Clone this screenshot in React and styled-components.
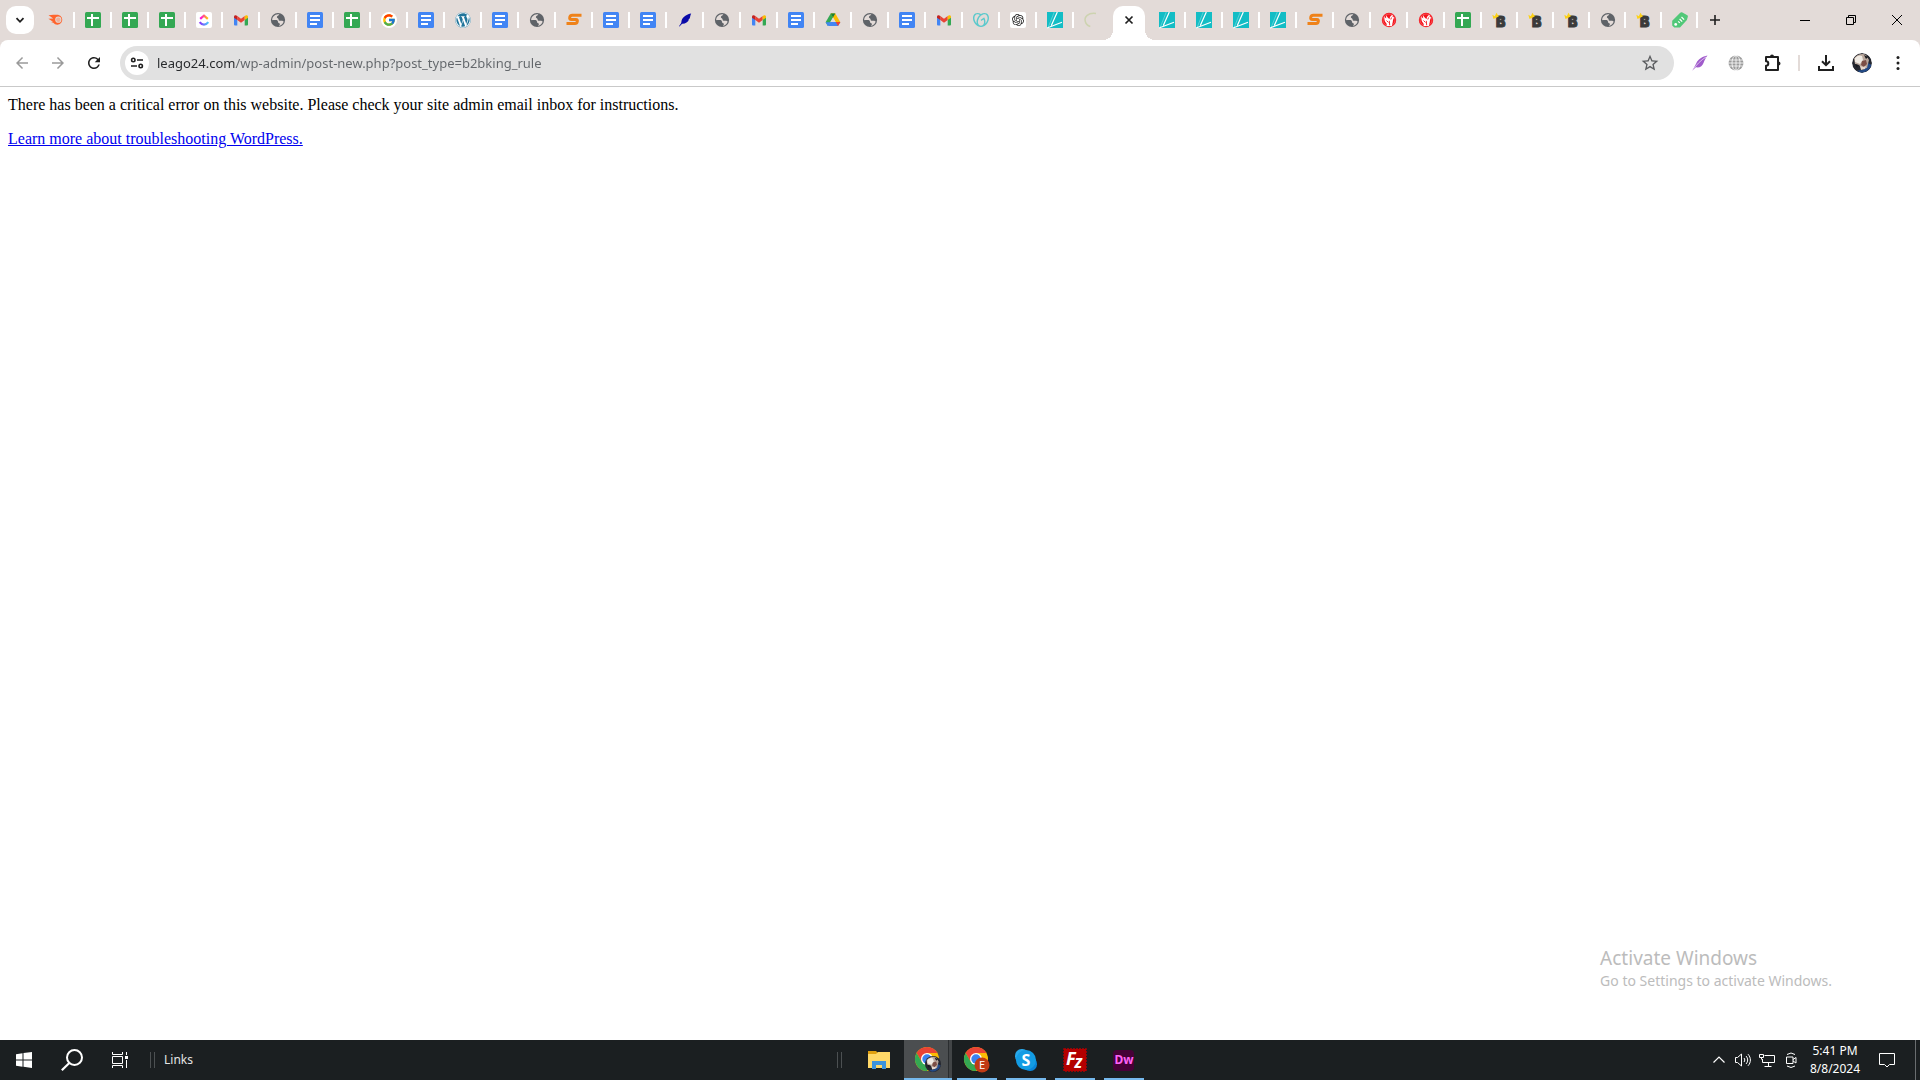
import React from "react";
import styled, { createGlobalStyle, css } from "styled-components";
import { FcGoogle } from "react-icons/fc";
import { FaWordpress } from "react-icons/fa";
import { MdRefresh, MdStarBorder, MdArrowBack, MdArrowForward } from "react-icons/md";
import { SiOpenai, SiGodaddy } from "react-icons/si";

const UI_FONT = '"Segoe UI", "Noto Sans", "Open Sans", sans-serif';

const GlobalStyle = createGlobalStyle`
  *, *::before, *::after { box-sizing: border-box; }
  body { margin: 0; background: #fff; }
  button { border: 0; padding: 0; margin: 0; background: transparent; color: inherit; font: inherit; }
  svg { display: block; flex: none; overflow: visible; }
`;

/* ---------- layout ---------- */

const Desktop = styled.div`
  display: flex;
  flex-direction: column;
  min-height: 100vh;
  font-family: ${UI_FONT};
`;

const Browser = styled.div`
  flex: 1;
  display: flex;
  flex-direction: column;
  background: #e3dbd8;
  min-width: 0;
`;

const TabStrip = styled.header`
  display: flex;
  height: 40px;
  padding-left: 6px;
`;

const TabSearch = styled.button`
  display: grid;
  place-items: center;
  width: 28px;
  height: 28px;
  margin: 6px 4px 0 0;
  border-radius: 10px;
  background: #fff;
  color: #1f1f1f;
`;

const TabList = styled.div`
  display: flex;
`;

const Tab = styled.button`
  display: flex;
  align-items: center;
  justify-content: space-between;
  width: ${(p) => (p.$narrow ? 36 : 37)}px;
  padding-left: 10px;
  &::after {
    content: "";
    width: 2px;
    height: 16px;
    background: ${(p) => (p.$last ? "transparent" : "#fff")};
  }
`;

const ActiveTab = styled.button`
  position: relative;
  display: grid;
  place-items: center;
  width: 32px;
  height: 34px;
  margin: 6px 4px 0 2px;
  border-radius: 10px 10px 0 0;
  background: #fff;
  color: #1f1f1f;
  &::before,
  &::after {
    content: "";
    position: absolute;
    bottom: 0;
    width: 10px;
    height: 10px;
  }
  &::before {
    right: 100%;
    background: radial-gradient(circle at 0 0, transparent 10px, #fff 10px);
  }
  &::after {
    left: 100%;
    background: radial-gradient(circle at 100% 0, transparent 10px, #fff 10px);
  }
  svg { margin-bottom: 6px; }
`;

const NewTab = styled.button`
  display: grid;
  place-items: center;
  width: 34px;
  color: #1f1f1f;
`;

const WindowControls = styled.div`
  display: flex;
  margin-left: auto;
`;

const WindowButton = styled.button`
  display: grid;
  place-items: center;
  width: 46px;
`;

const Toolbar = styled.nav`
  display: flex;
  align-items: center;
  height: 46px;
  padding: 0 4px;
  border-radius: 8px 8px 0 0;
  background: #fff;
`;

const ToolButton = styled.button`
  display: grid;
  place-items: center;
  width: 36px;
  height: 34px;
  color: ${(p) => (p.disabled ? "#9a9a9a" : "#1f1f1f")};
`;

const AddressBar = styled.form`
  flex: 1;
  display: flex;
  align-items: center;
  height: 34px;
  margin: 0 8px;
  padding: 0 6px 0 5px;
  border-radius: 17px;
  background: #e1e1e1;
`;

const SiteInfo = styled.button`
  display: grid;
  place-items: center;
  width: 24px;
  height: 24px;
  border-radius: 50%;
  background: #fff;
  color: #1f1f1f;
`;

const AddressInput = styled.input`
  flex: 1;
  min-width: 0;
  height: 24px;
  margin-left: 8px;
  padding: 0;
  border: 0;
  outline: 0;
  font: 13px/24px ${UI_FONT};
  color: transparent;
  caret-color: #1f1f1f;
  background: linear-gradient(to right, #26282b 79px, #62666a 79px);
  background-clip: text;
  -webkit-background-clip: text;
`;

const StarButton = styled.button`
  display: grid;
  place-items: center;
  width: 36px;
  height: 34px;
  color: #5a5c5f;
`;

const ToolDivider = styled.span`
  width: 2px;
  height: 16px;
  margin: 0 8px;
  background: #e3dbd8;
`;

const Avatar = styled.span`
  width: 20px;
  height: 20px;
  border-radius: 50%;
  overflow: hidden;
`;

/* ---------- page ---------- */

const Page = styled.main`
  position: relative;
  flex: 1;
  padding: 8px;
  border-top: 1px solid #c9c9c9;
  background: #fff;
  color: #000;
  font: 16px/20px "Times New Roman", "Liberation Serif", serif;
`;

const Message = styled.p`
  margin: 0 0 14px;
`;

const HelpLink = styled.a`
  color: #0000ee;
`;

const Watermark = styled.aside`
  position: absolute;
  right: 88px;
  bottom: 49px;
  color: #bcbcbc;
  font: 14px/20px ${UI_FONT};
`;

const WatermarkTitle = styled.div`
  font-size: 19px;
  line-height: 26px;
`;

/* ---------- taskbar ---------- */

const Taskbar = styled.footer`
  display: flex;
  justify-content: space-between;
  height: 40px;
  background: #1b1f21;
  color: #fff;
  font: 12px/18px ${UI_FONT};
`;

const TaskGroup = styled.div`
  display: flex;
  align-items: center;
`;

const TaskButton = styled.button`
  display: grid;
  place-items: center;
  width: 48px;
  height: 40px;
`;

const Grip = styled.span`
  width: 5px;
  height: 16px;
  margin-left: 6px;
  border: solid #4c5052;
  border-width: 0 1px;
`;

const LinksLabel = styled.span`
  margin-left: 9px;
  color: #e4e4e4;
`;

const Apps = styled(TaskGroup)`
  flex: 1;
  margin-left: 638px;
  min-width: 0;
`;

const AppButton = styled.button`
  display: grid;
  place-items: center;
  width: 40px;
  height: 40px;
  padding-top: 2px;
  margin-right: 9px;
  border-bottom: 2px solid ${(p) => (p.$idle ? "transparent" : "#76b9ed")};
  ${(p) =>
    p.$active &&
    css`
      width: 48px;
      margin-right: 5px;
      background: linear-gradient(to right, #4b4e50 44px, #2a2d2f 44px, #2a2d2f 45px, #424547 45px);
    `}
`;

const Explorer = styled(AppButton)`
  margin: 0 5px 0 17px;
`;

const DwTile = styled.span`
  display: grid;
  place-items: center;
  width: 21px;
  height: 21px;
  border-radius: 4px;
  background: #470137;
  color: #ff61f6;
  font: 700 12px/20px ${UI_FONT};
`;

const TrayButton = styled.button`
  display: grid;
  place-items: center;
  width: 24px;
  height: 40px;
`;

const Clock = styled.time`
  width: 64px;
  margin-right: 6px;
  text-align: center;
  line-height: 18px;
  white-space: pre-line;
`;

const ActionCenter = styled(TaskButton)`
  width: 28px;
  margin-right: 14px;
`;

const ShowDesktop = styled.button`
  width: 5px;
  height: 40px;
  border-left: 1px solid #6a6d6f;
`;

/* ---------- favicons ---------- */

const Svg = ({ size = 16, box = 16, children, ...rest }) => (
  <svg width={size} height={size} viewBox={`0 0 ${box} ${box}`} fill="none" aria-hidden="true" {...rest}>
    {children}
  </svg>
);

const Semrush = () => (
  <Svg>
    <path d="M.5 3.200c3.500-.4 6.500-.5 9.500-.5a5 5 0 1 1-4.700 8l-2.300-.6 2-.4L.4 6.800l4.800-.4C3.600 5 2 4.200.5 3.200z" fill="#ff642d" />
    <circle cx="10.300" cy="7.700" r="3.100" fill="#e3dbd8" />
    <circle cx="10.300" cy="7.700" r="2.200" fill="#ff642d" opacity=".35" />
  </Svg>
);
const Sheets = () => (
  <Svg>
    <rect width="16" height="16" rx="1.5" fill="#34a853" />
    <path d="M2 6h12M7 2v12" stroke="#fff" strokeWidth="2" />
  </Svg>
);
const Docs = () => (
  <Svg>
    <rect width="16" height="16" rx="1.5" fill="#4285f4" />
    <path d="M3 4h10M3 8h10M3 12h7" stroke="#fff" strokeWidth="2" />
  </Svg>
);
const ClickUp = () => (
  <Svg>
    <defs>
      <linearGradient id="cuTop"><stop stopColor="#ff02f0" /><stop offset="1" stopColor="#ffc800" /></linearGradient>
      <linearGradient id="cuBottom"><stop stopColor="#8930fd" /><stop offset="1" stopColor="#49ccf9" /></linearGradient>
    </defs>
    <rect width="16" height="16" rx="2" fill="#fff" />
    <path d="M4.200 6.900 8 3.600l3.800 3.300" stroke="url(#cuTop)" strokeWidth="2.200" />
    <path d="M3.700 10.200c2.300 3.200 6.300 3.200 8.600 0" stroke="url(#cuBottom)" strokeWidth="2.200" />
  </Svg>
);
const Gmail = () => (
  <Svg>
    <path d="M1 4.500 4.300 7v6.500H2a1 1 0 0 1-1-1z" fill="#4285f4" />
    <path d="M15 4.500 11.700 7v6.500H14a1 1 0 0 0 1-1z" fill="#34a853" />
    <path d="m4.300 4 3.700 2.800L11.700 4v4L8 10.800 4.300 8z" fill="#ea4335" />
    <path d="M11.700 4c1.500-1.400 3.300-1 3.300.8v.9L11.700 8z" fill="#fbbc04" />
    <path d="M4.300 4C2.800 2.600 1 3 1 4.800v.9L4.300 8z" fill="#c5221f" />
  </Svg>
);
const DefaultGlobe = () => (
  <Svg>
    <circle cx="8" cy="8" r="7.100" fill="#5f6368" />
    <path d="M9.300 2.300C8.600 3.800 7 3.900 6.900 5c-.1 1 .9 1 1.400 1.700.5.800.2 1.700 1.200 2 1.100.3 2.500-.3 3.300.3.600.5.800.500 1 .1-.4 2.400-2.400 4.400-4.700 4.800.1-.9.9-1 .8-2-.1-.9-1.200-.8-1.700-1.500-.5-.8.100-1.500-.8-2-1.300-.7-3.400 0-5.200-.1C2 5.100 4.500 2.300 8 2.200z" fill="#e3dbd8" />
    <path d="M2.200 8.300C4 8 6 8.600 6.500 9.400c.3.600-.7 1-.4 1.900.3.700 1 1 1 2.300C4.500 13.300 2.400 11 2.200 8.300z" fill="#5f6368" />
  </Svg>
);
const Google = () => (
  <Svg>
    <circle cx="8" cy="8" r="8" fill="#fff" />
    <FcGoogle x="1" y="1" size={14} />
  </Svg>
);
const WordPress = () => (
  <Svg>
    <circle cx="8" cy="8" r="7.800" fill="#fff" />
    <FaWordpress size={16} color="#21759b" />
  </Svg>
);
const OrangeS = () => (
  <Svg>
    <path d="M15.500 3.200H6.300c-1.500 0-2.200.5-2.500 1.800-.4 1.900 0 2.600 1.800 2.600h4.300c1.400 0 1.700.5 1.400 1.900-.3 1.500-.9 2-2.300 2H.5" stroke="#ef8219" strokeWidth="3" />
  </Svg>
);
const Quill = () => (
  <Svg>
    <path d="M14.200 1.500c-4 .8-8.200 3-9.600 7l-.4 2.600L2 14.300l.5.300 2.600-2.800c3 .2 6-1.400 6.900-4.200l-.8-.2 1.500-.9c.5-1.700.6-3.300 1.500-5z" fill="#0a0aa8" />
  </Svg>
);
const Drive = () => (
  <Svg>
    <path d="M5.700 1.500h4.600L5.300 10.200 2.900 14 .6 10.300z" fill="#34a853" />
    <path d="M5.700 1.500h4.600l5.100 8.700h-4.700z" fill="#fbbc04" />
    <path d="M2.900 14 5.400 10h10L13 14z" fill="#4285f4" />
    <path d="m10.700 10 2.300 4 2.400-4z" fill="#ea4335" />
    <path d="M.6 10.300h4.800L2.900 14z" fill="#4285f4" />
    <path d="M5.700 1.500h4.600L8 5.600z" fill="#188038" />
    <path d="M8 5.600 5.400 10h5.300z" fill="#e3dbd8" />
  </Svg>
);
const GoDaddy = () => <SiGodaddy size={16} color="#5bc9cc" aria-hidden="true" />;
const OpenAI = () => (
  <Svg>
    <rect width="16" height="16" rx="2" fill="#fff" />
    <SiOpenai x="2" y="2" size={12} color="#222" />
  </Svg>
);
const Leago = () => (
  <Svg>
    <rect width="16" height="16" fill="#13bdc5" />
    <path d="M10.300 0 4.300 13.500M0 16 15 10.300" stroke="#fff" strokeWidth="1.200" />
    <path d="M7.300 0 1.300 15" stroke="#fff" strokeWidth=".5" opacity=".6" />
  </Svg>
);
const Spinner = () => (
  <Svg>
    <path d="M8 1.200a7 7 0 1 0-1 13.500" stroke="#e3dbd8" strokeWidth="1" />
    <path d="M12 1.500C4 .5 0 5 1.300 9.500c.6 2.300 2.400 4.200 5 5" stroke="#cdd3b0" strokeWidth="1.500" />
  </Svg>
);
const RedBird = () => (
  <Svg>
    <circle cx="8" cy="8" r="7.200" fill="#f4141c" />
    <circle cx="8" cy="8" r="6" stroke="#fff" strokeWidth=".4" opacity=".6" />
    <path d="M3.300 4c.5 1.200 1 2 2 2.500C4.900 5.200 5 4 5.600 3.300c.2 1.300.8 2.200 1.800 2.900L8.600 7C8.700 5 9.800 3.300 12 2.800c-.5 1-.6 1.700-.1 2.400l1.200-.2c-.2 1.400-1.100 2.400-1.200 3.700-.1 1.800-.6 3.100-1.100 5.300H5.700c.2-1.600-.1-2.400-.6-3.100C3.600 9.800 3.200 7 3.300 4z" fill="#fff" />
    <path d="m8.300 8.800.4 4.500M5.500 8.500l2 2M10.500 5.500l-.7 2" stroke="#f4141c" strokeWidth=".9" />
  </Svg>
);
const KingB = () => (
  <Svg>
    <text x="4" y="15" fill="#3a3a3a" stroke="#3a3a3a" strokeWidth="1" fontFamily="Inter, sans-serif" fontWeight="900" fontSize="14">B</text>
    <path d="M1.500 7 .3 2.800l2.500 1.400L4.500.7l1.600 2.700L7.500 3 6.300 4.800z" fill="#fcd116" />
  </Svg>
);
const Tag = () => (
  <Svg>
    <path d="M10.400.4 15.300 3.200c.5.300.7.800.6 1.300l-1 3.500L8 15.600H2.200L.2 13.400V8.800L8.200.7c.6-.6 1.500-.7 2.200-.3z" fill="#51c878" />
    <circle cx="3.700" cy="12.400" r="1.400" fill="#fff" />
    <path d="m6.200 9.300 1.600 1.600M7.600 7l2.600 2.600M9.500 5l2.600 2.600" stroke="#fff" strokeWidth="1.200" />
  </Svg>
);

const FAVICONS = {
  semrush: Semrush, sheets: Sheets, docs: Docs, clickup: ClickUp, gmail: Gmail, globe: DefaultGlobe,
  google: Google, wordpress: WordPress, orange: OrangeS, quill: Quill, drive: Drive, godaddy: GoDaddy,
  openai: OpenAI, leago: Leago, loading: Spinner, bird: RedBird, b2bking: KingB, tag: Tag,
};

const TABS_BEFORE = [
  "semrush", "sheets", "sheets", "sheets", "clickup", "gmail", "globe", "docs", "sheets", "google",
  "docs", "wordpress", "docs", "globe", "orange", "docs", "docs", "quill", "globe", "gmail", "docs",
  "drive", "globe", "docs", "gmail", "godaddy", "openai", "leago", "loading",
];
const TABS_AFTER = ["leago", "leago", "leago", "leago", "orange", "globe", "bird", "bird", "sheets"];
const TABS_NARROW = ["b2bking", "b2bking", "b2bking", "globe", "b2bking", "tag"];

const renderTabs = (names, extra = {}) =>
  names.map((name, i) => {
    const Icon = FAVICONS[name];
    return (
      <Tab key={`${name}-${i}`} role="tab" aria-selected="false" aria-label={name} $last={name === "loading"} {...extra}>
        <Icon />
      </Tab>
    );
  });

/* ---------- drawings ---------- */

const Photo = ({ size = 20, ...rest }) => (
  <Svg size={size} box={20} {...rest}>
    <circle cx="10" cy="10" r="10" fill="#25272f" />
    <path d="M8 19.500c5 .5 9.500-2 11.500-7.500l-3.500-2-5 7-6 .5z" fill="#234a86" />
    <path d="M2 5.500c3-4.500 9-5.500 12-3.500l3 5-2 8-5 1-3-4-4-1z" fill="#b9a79c" />
    <path d="M3 5c3-3 5-3 7-2l1 4-3 4-5-2z" fill="#f0ebe4" />
    <path d="m10 8 4-1 1 4-3 3-3-2z" fill="#7b4e45" />
    <path d="m8 13 3 1 3-1-1 3-4 1z" fill="#e5d7cc" />
    <path d="m3 11 3 1-1 3zM12 2l4 2-2 2z" fill="#17181c" />
  </Svg>
);

const ChromeMark = () => (
  <>
    <circle cx="12" cy="12" r="12" fill="#fbbc04" />
    <path d="M1.600 6a12 12 0 0 1 20.800 0H12l-5.200 9z" fill="#ea4335" />
    <path d="M6.800 15 1.600 6A12 12 0 0 0 12 24l5.200-9z" fill="#34a853" />
    <circle cx="12" cy="12" r="6" fill="#fff" />
    <circle cx="12" cy="12" r="4.700" fill="#3b82f0" />
  </>
);

const ChromeWithPhoto = () => (
  <Svg size={26} box={26}>
    <ChromeMark />
    <Photo size={16} x="10" y="9" />
  </Svg>
);
const ChromeWithE = () => (
  <Svg size={26} box={26}>
    <ChromeMark />
    <circle cx="18" cy="18" r="7.500" fill="#c03a14" />
    <text x="18" y="21.500" textAnchor="middle" fill="#fff" fontFamily="Roboto, sans-serif" fontSize="10">E</text>
  </Svg>
);
const Skype = () => (
  <Svg size={22} box={22}>
    <rect x="0" y="0" width="14" height="14" rx="6.500" fill="#28a8ea" />
    <rect x="8" y="8" width="14" height="14" rx="6.500" fill="#0a84d8" />
    <circle cx="11" cy="11" r="10" fill="#139ce4" />
    <text x="11" y="16.500" textAnchor="middle" fill="#fff" fontFamily="Open Sans, sans-serif" fontWeight="700" fontSize="16">S</text>
  </Svg>
);
const FileZilla = () => (
  <Svg size={24} box={24}>
    <rect x="1" y="1" width="22" height="22" fill="#b30000" stroke="#b30000" strokeWidth="1.500" strokeDasharray="2 1" />
    <text x="3" y="17" fill="#fff" fontFamily="Open Sans, sans-serif" fontWeight="700" fontStyle="italic" fontSize="18">F</text>
    <text x="11.500" y="20" fill="#fff" fontFamily="Open Sans, sans-serif" fontWeight="700" fontStyle="italic" fontSize="17">z</text>
  </Svg>
);
const Folder = () => (
  <Svg size={22} box={22}>
    <path d="M0 2h8l2 2v4H0z" fill="#e0a010" />
    <path d="M0 5h8l2-2h12v16H0z" fill="#ffd868" />
    <path d="M4 12h14v8h-4v-4H8v4H4z" fill="#3d93dc" />
  </Svg>
);

export default function App() {
  return (
    <Desktop>
      <GlobalStyle />
      <Browser>
        <TabStrip>
          <TabSearch aria-label="Search tabs">
            <Svg><path d="m4.500 6.200 3.500 3.600 3.500-3.600" stroke="currentColor" strokeWidth="1.800" /></Svg>
          </TabSearch>
          <TabList role="tablist" aria-label="Open tabs">
            {renderTabs(TABS_BEFORE)}
            <ActiveTab role="tab" aria-selected="true" aria-label="Close tab">
              <Svg><path d="m4.500 4.500 7 7m0-7-7 7" stroke="currentColor" strokeWidth="1.700" /></Svg>
            </ActiveTab>
            {renderTabs(TABS_AFTER)}
            {renderTabs(TABS_NARROW, { $narrow: true })}
          </TabList>
          <NewTab aria-label="New tab">
            <Svg><path d="M3 8h10M8 3v10" stroke="currentColor" strokeWidth="1.600" /></Svg>
          </NewTab>
          <WindowControls>
            <WindowButton aria-label="Minimize">
              <Svg size={10} box={10}><path d="M0 5.500h10" stroke="#000" /></Svg>
            </WindowButton>
            <WindowButton aria-label="Restore">
              <Svg size={10} box={10}><path d="M.5 2.500h7v7h-7zM2.500 2.500v-2h7v7h-2" stroke="#000" /></Svg>
            </WindowButton>
            <WindowButton aria-label="Close window">
              <Svg size={10} box={10}><path d="m0 0 10 10M10 0 0 10" stroke="#000" /></Svg>
            </WindowButton>
          </WindowControls>
        </TabStrip>

        <Toolbar aria-label="Browser toolbar">
          <ToolButton disabled aria-label="Back"><MdArrowBack size={18} /></ToolButton>
          <ToolButton disabled aria-label="Forward"><MdArrowForward size={18} /></ToolButton>
          <ToolButton aria-label="Reload"><MdRefresh size={18} /></ToolButton>
          <AddressBar onSubmit={(e) => e.preventDefault()}>
            <SiteInfo type="button" aria-label="View site information">
              <Svg>
                <g stroke="currentColor" strokeWidth="1.600">
                  <circle cx="4.300" cy="5" r="1.700" /><path d="M8 5h6M2 11h6" />
                  <circle cx="11.700" cy="11" r="1.700" />
                </g>
              </Svg>
            </SiteInfo>
            <AddressInput
              aria-label="Address"
              spellCheck={false}
              defaultValue="leago24.com/wp-admin/post-new.php?post_type=b2bking_rule"
            />
            <StarButton type="button" aria-label="Bookmark this tab"><MdStarBorder size={20} /></StarButton>
          </AddressBar>
          <ToolButton aria-label="Quill extension">
            <Svg>
              <path d="M15.500.5C10.500 1.500 6 4 4.300 8.300L.5 15.500l3.400-3.200c4 .8 6.500-1.700 7.600-4.400C12.600 5.500 13.500 3 15.500.5z" fill="#a05ccb" />
              <path d="M.8 15.200C4.500 9.500 8.500 5.500 14 2" stroke="#e3c9f2" strokeWidth=".9" />
            </Svg>
          </ToolButton>
          <ToolButton aria-label="Network extension">
            <Svg>
              <circle cx="8" cy="8" r="7.500" fill="#9b9b9b" />
              <path d="M1 5h14M0 8h16M1 11h14M8 0v16" stroke="#fff" strokeWidth=".8" />
              <ellipse cx="8" cy="8" rx="4" ry="7.500" stroke="#fff" strokeWidth=".8" />
            </Svg>
          </ToolButton>
          <ToolButton aria-label="Extensions">
            <Svg size={18} box={18}>
              <path d="M3 3h12v13H3v-4.200a2.300 2.300 0 0 0 0-4.600z" stroke="currentColor" strokeWidth="2" strokeLinejoin="round" />
              <path d="M7 2.500a2 2 0 0 1 4 0zM15.500 7.500a2 2 0 0 1 0 4z" fill="currentColor" />
            </Svg>
          </ToolButton>
          <ToolDivider />
          <ToolButton aria-label="Downloads">
            <Svg>
              <path d="M8 0v10M4 6.200l4 4 4-4M1 11v4h14v-4" stroke="currentColor" strokeWidth="2" />
            </Svg>
          </ToolButton>
          <ToolButton aria-label="Profile"><Avatar><Photo /></Avatar></ToolButton>
          <ToolButton aria-label="Menu">
            <Svg>
              <g fill="currentColor"><circle cx="8" cy="2.500" r="1.500" /><circle cx="8" cy="8" r="1.500" /><circle cx="8" cy="13.500" r="1.500" /></g>
            </Svg>
          </ToolButton>
        </Toolbar>

        <Page>
          <Message>There has been a critical error on this website. Please check your site admin email inbox for instructions.</Message>
          <Message><HelpLink href="#troubleshooting">Learn more about troubleshooting WordPress.</HelpLink></Message>
          <Watermark>
            <WatermarkTitle>Activate Windows</WatermarkTitle>
            Go to Settings to activate Windows.
          </Watermark>
        </Page>
      </Browser>

      <Taskbar>
        <TaskGroup>
          <TaskButton aria-label="Start">
            <Svg>
              <path d="M0 2.300 6.500 1.300v6.200H0zM7.500 1.100 16 0v7.500H7.500zM0 8.500h6.500v6.200L0 13.700zM7.500 8.500H16V16l-8.500-1.200z" fill="#fff" />
            </Svg>
          </TaskButton>
          <TaskButton aria-label="Search">
            <Svg size={22} box={22}>
              <circle cx="13.500" cy="8.500" r="7.500" stroke="#fff" strokeWidth="2" /><path d="m8.300 14-7.500 7.300" stroke="#fff" strokeWidth="2.200" />
            </Svg>
          </TaskButton>
          <TaskButton aria-label="Task view">
            <Svg>
              <path d="M.5 0v2.500h10V0M.5 4.500h10v7H.5zM.5 16v-2.500h10V16M14.500 0v3M14.500 8v8" stroke="#fff" />
              <path d="M13 4h3v3h-3z" fill="#fff" />
            </Svg>
          </TaskButton>
          <Grip />
          <LinksLabel>Links</LinksLabel>
        </TaskGroup>
        <Apps>
          <Grip />
          <Explorer $idle aria-label="File Explorer"><Folder /></Explorer>
          <AppButton $active aria-label="Chrome"><ChromeWithPhoto /></AppButton>
          <AppButton aria-label="Chrome, profile E"><ChromeWithE /></AppButton>
          <AppButton aria-label="Skype"><Skype /></AppButton>
          <AppButton aria-label="FileZilla"><FileZilla /></AppButton>
          <AppButton aria-label="Dreamweaver"><DwTile>Dw</DwTile></AppButton>
        </Apps>
        <TaskGroup>
          <TrayButton aria-label="Show hidden icons">
            <Svg><path d="m2.500 10.500 5.500-5.500 5.500 5.500" stroke="#fff" strokeWidth="1.200" /></Svg>
          </TrayButton>
          <TrayButton aria-label="Volume">
            <Svg><path d="M.5 5.500h2l4-3.500v12l-4-3.500h-2zM9 6c1 1.200 1 2.800 0 4M11 4c2.200 2.400 2.200 5.600 0 8M13 2.200c3.200 3.500 3.200 8.100 0 11.600" stroke="#fff" /></Svg>
          </TrayButton>
          <TrayButton aria-label="Network">
            <Svg><path d="M5.500 3.500h10v7h-12V7M9.500 10.500v4M5.500 14.500h7M.5 2.500h4v3h-4zM2.500 5.500v2" stroke="#fff" /></Svg>
          </TrayButton>
          <TrayButton aria-label="Meet now">
            <Svg><path d="M3.500 5h6.500v6.500H3.500zM10 7.500l3-2v5.500l-3-2M4 2.500Q8-.5 12 2.500M4 14q4 3 8 0" stroke="#fff" /></Svg>
          </TrayButton>
          <Clock>{"5:41 PM\n8/8/2024"}</Clock>
          <ActionCenter aria-label="Notifications">
            <Svg><path d="M.5 1.500h15v11h-5L8 15l-2.500-2.500h-5z" stroke="#fff" /></Svg>
          </ActionCenter>
          <ShowDesktop aria-label="Show desktop" />
        </TaskGroup>
      </Taskbar>
    </Desktop>
  );
}
